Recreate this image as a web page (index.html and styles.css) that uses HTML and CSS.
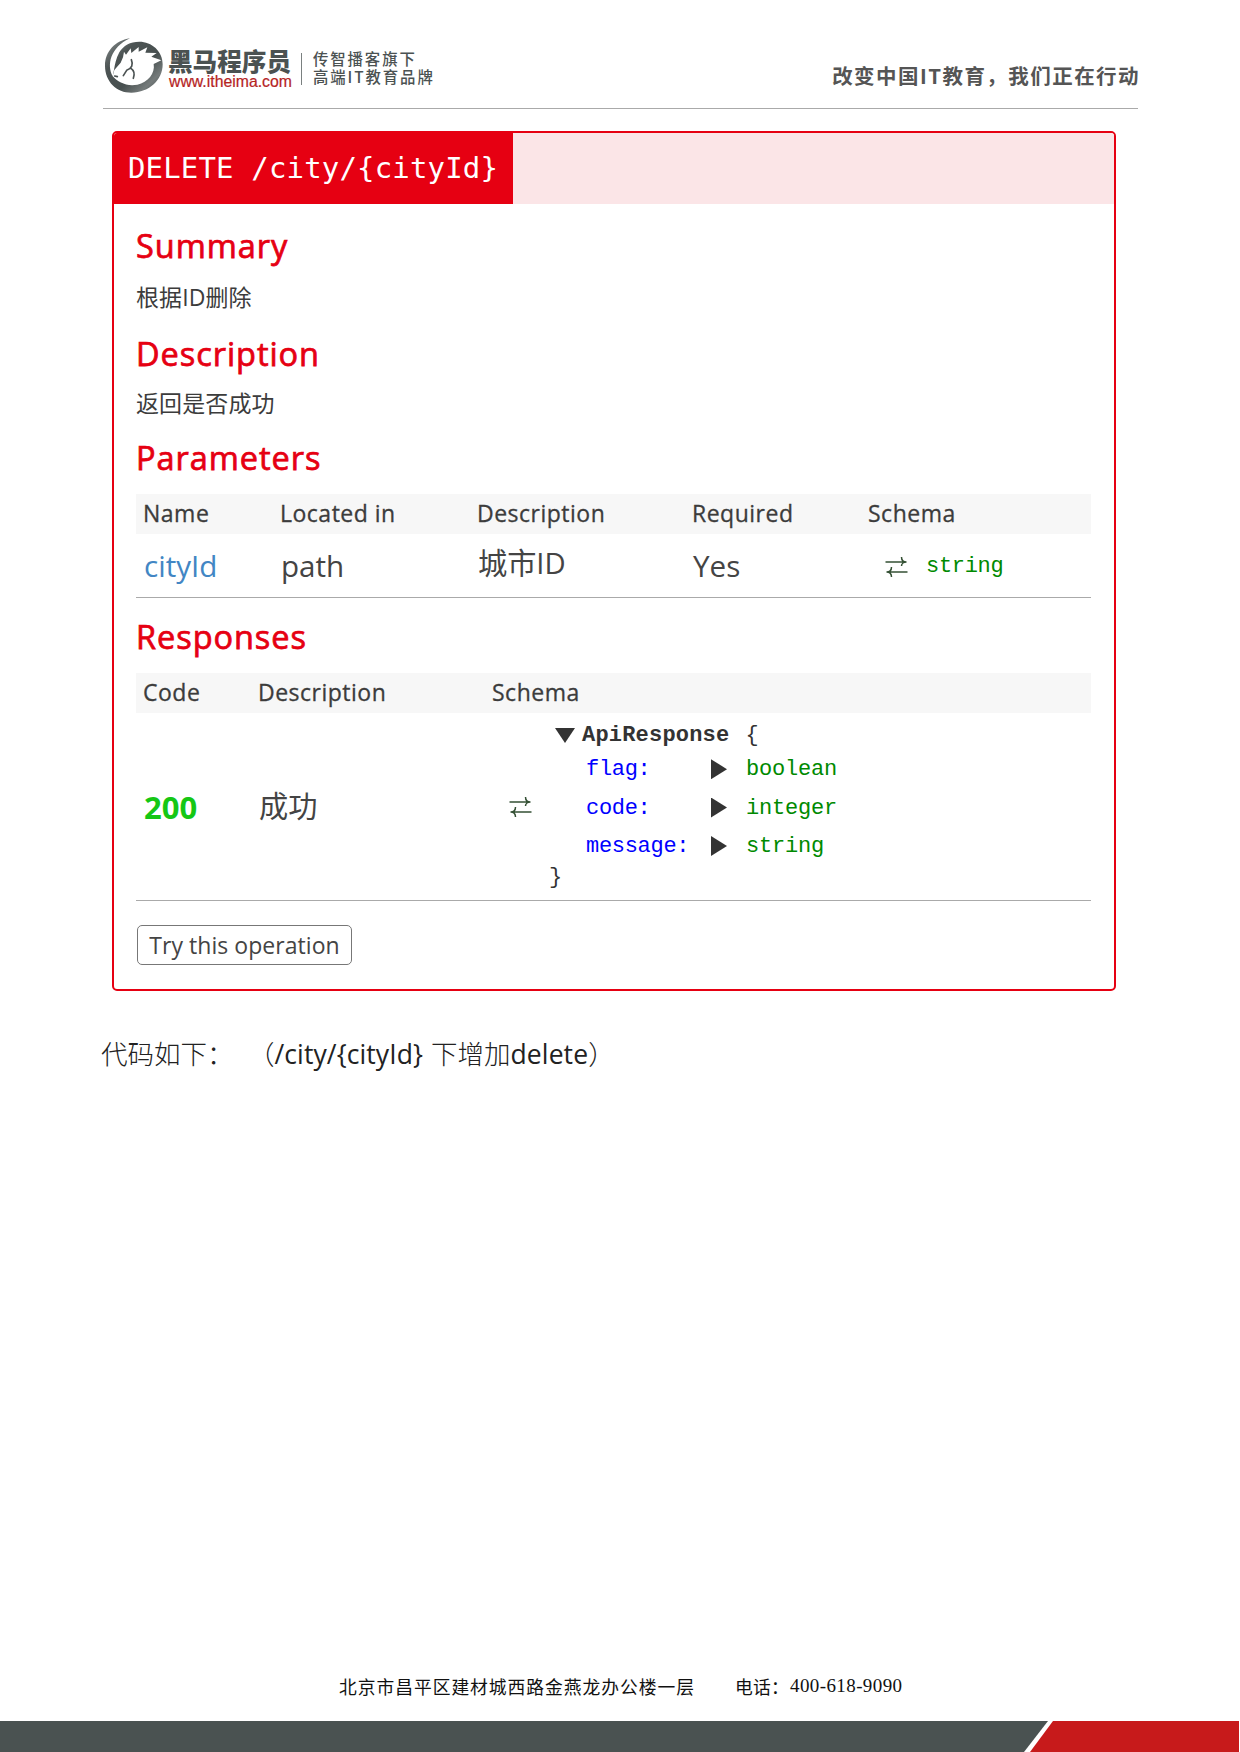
FILE: index.html
```html
<!DOCTYPE html>
<html lang="zh-CN">
<head>
<meta charset="utf-8">
<title>DELETE /city/{cityId}</title>
<link rel="stylesheet" href="styles.css">
</head>
<body>
<div class="page">
  <header class="top">
    <svg class="logo" viewBox="42 36 180 174" aria-hidden="true">
      <defs><linearGradient id="g" x1="0" y1="0" x2="1" y2="1"><stop offset="0" stop-color="#8b9191"/><stop offset=".3" stop-color="#4c5353"/><stop offset=".6" stop-color="#485050"/><stop offset=".8" stop-color="#757b7b"/><stop offset="1" stop-color="#434b4b"/></linearGradient></defs>
      <path fill="url(#g)" d="M120 40C75 47 45 80 45 122C45 170 80 203 124 203C178 203 218 165 218 118C218 78 185 50 148 50C120 50 100 62 88 82C78 100 75 118 72 134L68 154C50 120 60 68 120 40Z"/>
      <path fill="#fff" d="M99 97L102 80L108 89L122 70L124 84L146 66L146 80L172 67L166 83L200 84L184 95L214 106L191 117C196 145 174 172 142 179C110 185 84 172 68 154L73 135L92 113Z"/>
      <path fill="none" stroke="#4b5252" stroke-width="5" stroke-linecap="round" d="M124 104C130 119 126 130 110 136L100 152M123 130C133 137 135 146 130 160M74 153L82 155"/>
    </svg>
    <div class="brand"><b>黑马程序员</b><span>www.itheima.com</span></div>
    <div class="tag"><span>传智播客旗下</span><span>高端IT教育品牌</span></div>
    <div class="slogan">改变中国IT教育，我们正在行动</div>
  </header>

  <section class="card">
    <div class="bar"><h1>DELETE /city/{cityId}</h1></div>
    <div class="body">
      <h2 class="summary">Summary</h2>
      <p class="p1">根据ID删除</p>
      <h2 class="desc">Description</h2>
      <p class="p2">返回是否成功</p>
      <h2 class="params">Parameters</h2>
      <div class="table ptable">
        <div class="row head"><span>Name</span><span>Located in</span><span>Description</span><span>Required</span><span>Schema</span></div>
        <div class="row data"><a>cityId</a><span>path</span><span class="zh">城市ID</span><span>Yes</span>
          <div class="type"><svg class="swap" viewBox="0 0 22 22"><path d="M0 6H21M16 1C16 4 18 6 21 6C18 6 16 8 16 10M22 16H1M6 11C6 14 4 16 1 16C4 16 6 18 6 21"/></svg><code class="green">string</code></div></div>
      </div>
      <h2 class="resp">Responses</h2>
      <div class="table rtable">
        <div class="row head"><span>Code</span><span>Description</span><span>Schema</span></div>
        <div class="row data"><strong>200</strong><span class="zh">成功</span>
          <div class="schema"><svg class="swap" viewBox="0 0 22 22"><path d="M0 6H21M16 1C16 4 18 6 21 6C18 6 16 8 16 10M22 16H1M6 11C6 14 4 16 1 16C4 16 6 18 6 21"/></svg>
            <div class="tree">
              <div class="open"><i class="down"></i><b>ApiResponse</b><span>{</span></div>
              <div class="prop"><code>flag:</code><i class="right"></i><code class="green">boolean</code></div>
              <div class="prop"><code>code:</code><i class="right"></i><code class="green">integer</code></div>
              <div class="prop"><code>message:</code><i class="right"></i><code class="green">string</code></div>
              <div class="close">}</div>
            </div>
          </div></div>
      </div>
      <button class="try">Try this operation</button>
    </div>
  </section>

  <p class="note"><span class="lead">代码如下：</span><span>（</span><span class="lat">/city/{cityId}</span><span class="add">下增加</span><span class="lat">delete</span><span>）</span></p>

  <footer>
    <div class="addr"><span class="street">北京市昌平区建材城西路金燕龙办公楼一层</span><span class="tel">电话：</span><span class="num">400-618-9090</span></div>
    <div class="strip"><div class="dark"></div><div class="red"></div></div>
  </footer>
</div>
</body>
</html>
```
FILE: styles.css
```css
* { box-sizing: border-box; }
body { margin: 0; background: #fff; }
h1, h2, p { margin: 0; font-weight: 400; }
.page { width: 1240px; height: 1752px; display: flex; flex-direction: column; overflow: hidden; font-family: "Open Sans", "Noto Sans CJK SC", sans-serif; color: #3c3c3c; }

.top { height: 109px; margin: 0 102px 22px 103px; padding: 37px 0 0 1px; border-bottom: 1.5px solid #aaa; display: flex; align-items: flex-start; white-space: nowrap; font-family: "Noto Sans CJK SC", sans-serif; color: #4b5252; }
.logo { width: 60px; height: 58px; }
.brand { margin: 10px 0 0 4px; width: 133px; height: 44px; display: flex; flex-direction: column; }
.brand b { font-size: 24.6px; line-height: 26px; font-weight: 900; }
.brand span { font: 15.8px/17px "Liberation Sans", sans-serif; padding-left: 1px; color: #b5241f; -webkit-text-stroke: .2px #b5241f; }
.tag { margin-top: 16px; height: 32px; padding-left: 11px; border-left: 1.5px solid #7a8080; display: flex; flex-direction: column; justify-content: center; font-size: 15.4px; letter-spacing: 1.9px; line-height: 18px; font-weight: 500; }
.tag span { position: relative; top: -2px; }
.slogan { margin: 23px -2px 0 auto; font-size: 20.5px; letter-spacing: 1.45px; line-height: 30px; font-weight: 700; color: #555; }

.card { width: 1004px; height: 860px; margin-left: 112px; border: 2px solid #e60012; border-radius: 5px; flex: none; overflow: hidden; }
.bar { height: 71px; background: #fbe5e7; }
.bar h1 { width: 399px; height: 71px; padding-left: 14px; background: #e60012; color: #fff; font: 29px/71px "DejaVu Sans Mono", monospace; letter-spacing: .16px; white-space: nowrap; }
.body { padding: 20px 22px 0; }
h2 { height: 44px; font-size: 32.5px; line-height: 44px; font-weight: 400; letter-spacing: .95px; -webkit-text-stroke: .75px #e60012; color: #e60012; }
p { white-space: nowrap; }
.p1, .p2 { height: 36px; line-height: 36px; font-size: 23px; font-weight: 400; }
.p1 { margin-top: 11px; letter-spacing: .1px; }
.desc { margin-top: 17px; }
.p2 { margin-top: 9px; letter-spacing: .1px; }
.params { margin-top: 15px; }
.resp { margin-top: 17px; }
.table { margin-top: 14px; width: 955px; border-bottom: 1.5px solid #aaa; }
.row { display: grid; padding-left: 7px; white-space: nowrap; }
.ptable .row { grid-template-columns: 137px 197px 215px 176px 1fr; }
.rtable .row { grid-template-columns: 115px 234px 1fr; }
.head { height: 40px; line-height: 38px; background: #f7f7f7; font-size: 23px; letter-spacing: .5px; -webkit-text-stroke: .3px #3c3c3c; }
.data { font-size: 29.6px; align-items: center; padding-left: 8px; color: #444; }
.ptable .data { height: 63px; line-height: 63px; }
.ptable a { color: #4286c4; }
.zh { font-weight: 400; }
.data .zh { position: relative; top: -2px; font-size: 29.2px; }
.rtable { margin-top: 14px; }
.rtable .data { height: 187px; }
strong { color: #15c715; font-weight: 700; font-size: 31px; }
.swap { width: 23px; height: 22px; fill: none; stroke: #345034; stroke-width: 1.5; flex: none; }
code, .tree { font: 22px/38px "Liberation Mono", monospace; letter-spacing: -.3px; }
code { color: #00f; }
.green { color: #008a00; }
.type { display: flex; align-items: center; gap: 18px; padding: 2px 0 0 16px; }
.schema { display: flex; align-items: center; padding-left: 16px; height: 187px; }
.tree { width: 300px; height: 180px; margin: 3px 0 0 17px; color: #333; }
.open { height: 33px; line-height: 34px; padding-left: 6px; display: flex; align-items: center; }
.open .down { position: relative; top: 1px; }
.open b { margin-left: 7px; padding-top: 3px; letter-spacing: .2px; }
.open span { margin-left: 16px; padding-top: 2px; }
.prop { height: 38.4px; display: grid; grid-template-columns: 124px 36px 1fr; align-items: center; padding-left: 37px; }
.prop .right { margin-top: -2px; }
.prop .green { letter-spacing: -.2px; }
.close { height: 26px; line-height: 23px; }
.down { width: 20px; height: 15px; background: #333; clip-path: polygon(0 0, 100% 0, 50% 100%); }
.right { width: 16px; height: 20px; margin-left: 1px; background: #333; clip-path: polygon(0 0, 100% 50%, 0 100%); }
.try { display: block; margin: 24px 0 0 1px; width: 215px; height: 40px; padding: 0; border: 1.5px solid #777; border-radius: 5px; background: #fff; color: #444; font: 23px/39px "Open Sans", sans-serif; letter-spacing: .05px; white-space: nowrap; }

.note { margin: 43px 0 0 101px; height: 40px; display: flex; font-size: 26.5px; line-height: 40px; font-weight: 300; color: #222; }
.lead { width: 147px; }
.lat { font-weight: 400; letter-spacing: .1px; }
.add { margin-left: 8px; }
footer { margin-top: auto; color: #111; }
.addr { height: 30px; margin: 0 0 20px 339px; display: flex; font: 400 17.8px/30px "Noto Sans CJK SC", sans-serif; white-space: nowrap; }
.street { width: 396px; letter-spacing: -.1px; }
.tel { width: 55px; letter-spacing: .2px; }
.street { letter-spacing: .95px; }
.num { font-family: "Liberation Serif", serif; font-size: 19px; letter-spacing: .4px; }
.strip { position: relative; height: 31px; }
.dark, .red { position: absolute; inset: 0 auto 0 0; }
.dark { width: 1048px; background: #4a5251; clip-path: polygon(0 0, 100% 0, 1024px 100%, 0 100%); }
.red { left: 1030px; width: 209px; background: #c71a1b; clip-path: polygon(23px 0, 100% 0, 100% 100%, 0 100%); }
```
